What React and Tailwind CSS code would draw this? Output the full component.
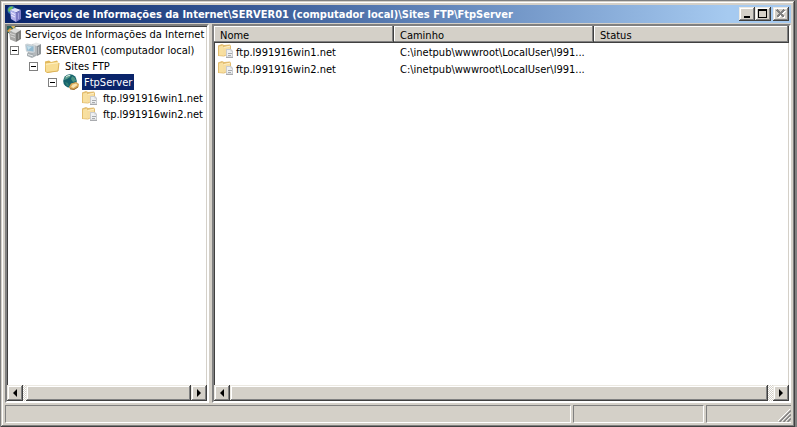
import React from 'react';

const FONT = "font-['DejaVu_Sans_Condensed','DejaVu_Sans',sans-serif]";
const SUNKEN = 'border-2 border-t-[#808080] border-l-[#808080] border-b-white border-r-white shadow-[inset_1px_1px_0_#404040,inset_-1px_-1px_0_#d4d0c8]';
const RAISED = 'bg-[#d4d0c8] shadow-[inset_-1px_-1px_0_#404040,inset_1px_1px_0_#ece9e2,inset_-2px_-2px_0_#808080,inset_2px_2px_0_#ffffff]';

function TitleIcon() {
  return (
    <svg width="16" height="16" viewBox="0 0 16 16" className="shrink-0" aria-hidden="true">
      <circle cx="4.5" cy="4" r="4" fill="#2f78b8" />
      <path d="M1 4 Q2 0 6 0.5 L5 4 2 6z" fill="#6fbe52" />
      <path d="M3 4 L8 2 14 4 9 6.5z" fill="#e2e2fa" />
      <path d="M3 4 L9 6.5 V16 L4 13z" fill="#b1b0ea" />
      <path d="M14 4 L9 6.5 V16 L14 13z" fill="#7c7bc4" />
      <path d="M4 6.5 L8 8.5 M4 9 L8 11" stroke="#f0f0ff" />
      <path d="M11.5 7 V13" stroke="#a5a4e0" />
    </svg>
  );
}

function RootIcon() {
  return (
    <svg width="16" height="16" viewBox="0 0 16 16" className="shrink-0" aria-hidden="true">
      <path d="M0 0 H8 L9 4 3 8 0 6z" fill="#28615c" />
      <path d="M0 5 L3 2 5 3 3 7z" fill="#e09a3c" />
      <path d="M4 0 L8 0 7 4z" fill="#d8b25a" />
      <path d="M2 5 L8 2 14 4 9 7z" fill="#dededc" />
      <path d="M2 5 L9 7 V16 L3 13.5z" fill="#a8a8a6" />
      <path d="M14 4 L9 7 V16 L14 13z" fill="#7c7c7a" />
      <path d="M3 7.5 L8 9 M3.5 10 L8 11.5" stroke="#d8d8d6" />
      <path d="M11.5 7.5 V13" stroke="#a0a09e" />
    </svg>
  );
}

function ServerIcon() {
  return (
    <svg width="16" height="16" viewBox="0 0 16 16" className="shrink-0" aria-hidden="true">
      <path d="M7 2 L11 0.5 16 2 12 4z" fill="#e6e8e9" />
      <path d="M7 2 L12 4 V14 L8 12z" fill="#b4b8bb" />
      <path d="M16 2 L12 4 V14 L16 12z" fill="#8d9296" />
      <path d="M13.5 5 V12" stroke="#b9bdc0" />
      <path d="M0 2.5 L2 1.5 L10 3 V10 L8 11 L1 9.5z" fill="#c9d2d7" />
      <path d="M1.5 3.5 L8.5 4.5 V9.5 L2 8.5z" fill="#8fb8cf" />
      <path d="M2 4 L7 4.7 3 8z" fill="#c4deea" />
      <path d="M3 10 L8 11 V12 L11 13 V14 L7 16 2 14 V12z" fill="#a7aeb2" />
      <path d="M3 12.5 L8 14" stroke="#e4e8ea" />
    </svg>
  );
}

function FolderIcon() {
  return (
    <svg width="16" height="16" viewBox="0 0 16 16" className="shrink-0" aria-hidden="true">
      <path d="M1 3.5 L5 2.5 7 4 13 2.5 14 4 V13 L3 15 1 13.5z" fill="#e2b95c" />
      <path d="M1.5 5.5 L13.5 4 15 5 14 13 3 14.5 2 13z" fill="#f8dd93" />
      <path d="M2 6.3 L14 4.8" stroke="#fff1c2" />
      <path d="M3 14.5 L14 13 15 5" fill="none" stroke="#dcb35a" />
    </svg>
  );
}

function GlobeIcon() {
  return (
    <svg width="16" height="16" viewBox="0 0 16 16" className="shrink-0" aria-hidden="true">
      <circle cx="7" cy="7" r="6.8" fill="#14626c" />
      <path d="M2 3 Q5 0 8 1 L7 3 4 5 1 6z" fill="#5c9c8c" />
      <path d="M9 2 L12 4 13 7 10 8 8 5z" fill="#4d9482" />
      <path d="M2 8 L5 9 6 12 4 12z" fill="#2f7d74" />
      <path d="M3 3 Q5 1.2 7 1.5" stroke="#d8ece4" fill="none" />
      <path d="M6 13 L8 9.5 13 8 16 10 15.5 13 11 16 7 15z" fill="#d9a656" />
      <path d="M8 13 L9.5 10.5 13 9.5 14.5 11 10.5 14z" fill="#f7e3b0" />
      <path d="M7 14.8 L11 15.5 15 13" stroke="#9a6f36" fill="none" />
    </svg>
  );
}

function SiteIcon() {
  return (
    <svg width="16" height="16" viewBox="0 0 16 16" className="shrink-0" aria-hidden="true">
      <path d="M0 2.5 L4 1 6 2 12 1.5 13 3 V10 L6 13.5 0 13z" fill="#e3bd70" />
      <path d="M1 3.5 L5 2.5 V12.5 H1z" fill="#f8e0a0" />
      <path d="M5 4.5 L12 3 V10 L5 13z" fill="#f6dda0" />
      <path d="M5.5 4.5 L12 3.2" stroke="#fff0c8" />
      <path d="M8 6 H13 L15 8 V14.5 H8z" fill="#c9cbce" />
      <path d="M9 7 H12.5 V8.5 H14 V13.5 H9z" fill="#eef0f2" />
      <path d="M10 10.5 H14 M10 12.5 H13" stroke="#a6a9ad" />
      <path d="M8 14.5 H15" stroke="#a9abaf" />
    </svg>
  );
}

function Caption({ label, children }) {
  return (
    <button type="button" aria-label={label} className={`flex h-[14px] w-4 items-center justify-center ${RAISED}`}>
      <svg width="10" height="10" viewBox="0 0 10 10" shapeRendering="crispEdges" aria-hidden="true">{children}</svg>
    </button>
  );
}

function ArrowButton({ label, d }) {
  return (
    <button type="button" aria-label={label} className={`flex w-4 shrink-0 items-center justify-center ${RAISED}`}>
      <svg width="8" height="8" viewBox="0 0 8 8" aria-hidden="true"><path d={d} fill="#000" /></svg>
    </button>
  );
}

function ScrollBar({ gap, label }) {
  return (
    <div aria-label={label} role="group" className="flex h-4 shrink-0 bg-[#e9e7e3] bg-[repeating-conic-gradient(#ffffff_0_25%,#d4d0c8_0_50%)] bg-size-[2px_2px]">
      <ArrowButton label="Rolar para a esquerda" d="M6 0 V8 L2 4z" />
      <div className={`flex-1 ${gap} ${RAISED}`} />
      <ArrowButton label="Rolar para a direita" d="M2 0 V8 L6 4z" />
    </div>
  );
}

function TreeRow({ indent, icon, label, open, selected, root }) {
  return (
    <li role="treeitem" aria-selected={!!selected} className={`flex h-4 items-center ${indent}`}>
      {open && (
        <button type="button" aria-label={`Recolher ${label}`} className="mr-[6px] flex size-[9px] shrink-0 items-center justify-center border border-[#808080] bg-white">
          <span className="h-px w-[5px] bg-black" />
        </button>
      )}
      {icon}
      <span className={`h-4 pl-[2px] leading-[18px] whitespace-nowrap ${root ? '' : 'ml-[3px]'} ${selected ? 'bg-[#0a246a] pr-[2px] text-white' : ''}`}>{label}</span>
    </li>
  );
}

const sites = [
  { name: 'ftp.l991916win1.net', path: 'C:\\inetpub\\wwwroot\\LocalUser\\l991...' },
  { name: 'ftp.l991916win2.net', path: 'C:\\inetpub\\wwwroot\\LocalUser\\l991...' },
];

const CELL = 'h-[17px] leading-[19px] whitespace-nowrap';
const TH = 'bg-[#d4d0c8] p-0 pl-[6px] text-left font-normal shadow-[inset_-1px_-1px_0_#404040,inset_-2px_-2px_0_#808080,inset_1px_1px_0_#ffffff]';
const STATUS = 'border border-t-[#808080] border-r-white border-b-white border-l-[#808080]';

export default function App() {
  return (
    <div className={`flex h-screen bg-[#808080] pt-px pr-[2px] pl-px text-[11px] leading-4 text-black ${FONT}`}>
      <main className="flex min-w-0 flex-1 flex-col bg-[#d4d0c8] p-1 shadow-[inset_-1px_-1px_0_#404040,inset_1px_1px_0_#d4d0c8,inset_-2px_-2px_0_#808080,inset_2px_2px_0_#ffffff]">
        <header className="flex h-[18px] shrink-0 items-center bg-linear-to-r from-[#0a246a] to-[#a6caf0] to-92% px-[2px]">
          <TitleIcon />
          <h1 className="ml-[2px] h-[18px] flex-1 truncate leading-[20px] font-bold text-white">
            Serviços de Informações da Internet\SERVER01 (computador local)\Sites FTP\FtpServer
          </h1>
          <div className="flex">
            <Caption label="Minimizar"><path d="M2 7 H8 V9 H2z" fill="#000" /></Caption>
            <Caption label="Maximizar"><path d="M0 0 H9 V9 H0z M1 2 V8 H8 V2z" fillRule="evenodd" fill="#000" /></Caption>
            <div className="ml-[2px] flex">
              <Caption label="Fechar">
                <path d="M2 2 L9 9 M9 2 L2 9" stroke="#fff" strokeWidth="1.5" />
                <path d="M1 1 L8 8 M8 1 L1 8" stroke="#808080" strokeWidth="1.5" />
              </Caption>
            </div>
          </div>
        </header>

        <div className="mt-px flex min-h-0 flex-1 gap-[3px]">
          <nav aria-label="Árvore do console" className={`flex w-[204px] shrink-0 flex-col bg-white ${SUNKEN}`}>
            <ul role="tree" className="min-h-0 flex-1 overflow-hidden">
              <TreeRow root indent="" icon={<RootIcon />} label="Serviços de Informações da Internet" />
              <TreeRow indent="pl-[3px]" open icon={<ServerIcon />} label="SERVER01 (computador local)" />
              <TreeRow indent="pl-[22px]" open icon={<FolderIcon />} label="Sites FTP" />
              <TreeRow indent="pl-[41px]" open selected icon={<GlobeIcon />} label="FtpServer" />
              {sites.map((s) => (
                <TreeRow key={s.name} indent="pl-[75px]" icon={<SiteIcon />} label={s.name} />
              ))}
            </ul>
            <ScrollBar label="Rolagem da árvore" gap="ml-[3px]" />
          </nav>

          <section aria-label="Sites" className={`flex min-w-0 flex-1 flex-col bg-white ${SUNKEN}`}>
            <div className="min-h-0 flex-1 overflow-hidden">
              <table className="w-full table-fixed border-collapse">
                <thead>
                  <tr>
                    <th className={`w-[180px] ${TH}`}><div className={CELL}>Nome</div></th>
                    <th className={`w-[200px] ${TH}`}><div className={CELL}>Caminho</div></th>
                    <th className={TH}><div className={CELL}>Status</div></th>
                  </tr>
                </thead>
                <tbody>
                  {sites.map((s) => (
                    <tr key={s.name}>
                      <td className="p-0 pl-1">
                        <div className={`flex gap-[2px] ${CELL}`}><SiteIcon /><span>{s.name}</span></div>
                      </td>
                      <td className="p-0 pl-[6px]"><div className={CELL}>{s.path}</div></td>
                      <td className="p-0" />
                    </tr>
                  ))}
                </tbody>
              </table>
            </div>
            <ScrollBar label="Rolagem da lista" gap="mr-[5px]" />
          </section>
        </div>

        <footer className="mt-[2px] flex h-[18px] shrink-0 gap-[2px]">
          <div className={`flex-1 ${STATUS}`} />
          <div className={`w-[131px] ${STATUS}`} />
          <div className={`flex w-[85px] items-end justify-end ${STATUS} border-r-0`}>
            <svg width="13" height="13" viewBox="0 0 13 13" aria-hidden="true">
              <path d="M0 12 L12 0 M4 12 L12 4 M8 12 L12 8" stroke="#fff" />
              <path d="M1.5 13 L13 1.5 M5.5 13 L13 5.5 M9.5 13 L13 9.5" stroke="#808080" strokeWidth="1.5" />
            </svg>
          </div>
        </footer>
      </main>
    </div>
  );
}
